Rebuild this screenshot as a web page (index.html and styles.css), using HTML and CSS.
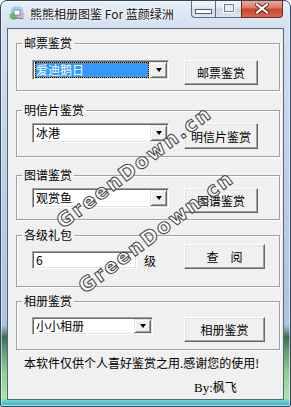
FILE: index.html
```html
<!DOCTYPE html>
<html lang="zh-CN">
<head>
  <meta charset="UTF-8" />
  <meta name="viewport" content="width=device-width, initial-scale=1.0" />
  <title>熊熊相册图鉴 For 蓝颜绿洲</title>
  <link rel="stylesheet" href="styles.css">
</head>
<body>
  <div class="window">
    <div class="titlebar">
      <svg class="app-icon" width="16" height="16" viewBox="0 0 16 16">
        <ellipse cx="8" cy="6" rx="6.5" ry="5" fill="#9fd3ee" />
        <ellipse cx="5" cy="11" rx="4.5" ry="3.5" fill="#6cbf5e" />
        <ellipse cx="11.5" cy="10.5" rx="4" ry="3.5" fill="#f3a6c4" />
        <rect x="5" y="5" width="6" height="5" fill="#fff" stroke="#5a7fa8" stroke-width="0.8" />
        <path d="M3 14 Q8 12 14 14" stroke="#3d8fc0" stroke-width="1.2" fill="none" />
      </svg>
      <span class="title">熊熊相册图鉴 For 蓝颜绿洲</span>
      <div class="caption-btns">
        <span class="cap cap-min"><i></i></span>
        <span class="cap cap-max"><i></i></span>
        <span class="cap cap-close">
          <svg width="14" height="11" viewBox="0 0 14 11">
            <path d="M2 1.5 L12 9.5 M12 1.5 L2 9.5" stroke="#5a2018" stroke-width="4" stroke-linecap="square" />
            <path d="M2 1.5 L12 9.5 M12 1.5 L2 9.5" stroke="#fff" stroke-width="2.2" stroke-linecap="square" />
          </svg>
        </span>
      </div>
    </div>

    <div class="client">
      <fieldset class="group g1">
        <legend>邮票鉴赏</legend>
        <div class="row">
          <div class="combo">
            <span class="combo-text selected">爱迪鹅日</span>
            <span class="drop"><i></i></span>
          </div>
          <button class="btn">邮票鉴赏</button>
        </div>
      </fieldset>

      <fieldset class="group g2">
        <legend>明信片鉴赏</legend>
        <div class="row">
          <div class="combo">
            <span class="combo-text">冰港</span>
            <span class="drop"><i></i></span>
          </div>
          <button class="btn btn-tall">明信片鉴赏</button>
        </div>
      </fieldset>

      <fieldset class="group g3">
        <legend>图谱鉴赏</legend>
        <div class="row">
          <div class="combo">
            <span class="combo-text">观赏鱼</span>
            <span class="drop"><i></i></span>
          </div>
          <button class="btn">图谱鉴赏</button>
        </div>
      </fieldset>

      <fieldset class="group g4">
        <legend>各级礼包</legend>
        <div class="row">
          <div class="level">
            <span class="input">6</span>
            <span class="unit">级</span>
          </div>
          <button class="btn btn-wide">查　阅</button>
        </div>
      </fieldset>

      <fieldset class="group g5">
        <legend>相册鉴赏</legend>
        <div class="row">
          <div class="combo combo-small">
            <span class="combo-text">小小相册</span>
            <span class="drop"><i></i></span>
          </div>
          <button class="btn btn-wide">相册鉴赏</button>
        </div>
      </fieldset>

      <p class="note">本软件仅供个人喜好鉴赏之用.感谢您的使用!</p>
      <p class="by"><span class="by-latin">By:</span>枫飞</p>
    </div>

    <div class="watermark wm1">GreenDown.cn</div>
    <div class="watermark wm2">GreenDown.cn</div>
  </div>
</body>
</html>
```

FILE: styles.css
```css
body {
  margin: 0;
  background: #fff;
  font-family: "Noto Sans CJK SC", "Noto Sans", sans-serif;
  font-size: 12px;
  color: #000;
}
.window {
  position: relative;
  box-sizing: border-box;
  width: 291px;
  height: 407px;
  display: flex;
  flex-direction: column;
  padding: 0 6px 6px;
  border: 1px solid #33475c;
  border-radius: 7px 7px 2px 2px;
  overflow: hidden;
  background: linear-gradient(to bottom,
    #e6eef8 0, #d3e0ef 27px, #bccfe6 45%, #aec3de 80%,
    #3e6c57 83%, #5c9a6c 86%, #92d094 92%, #aee3ab 98%, #3cbde0 99.4%);
  box-shadow: inset 0 0 0 1px rgba(255, 255, 255, 0.55);
}

/* title bar */
.titlebar {
  height: 27px;
  display: flex;
  align-items: flex-start;
}
.app-icon {
  margin: 4px 0 0 2px;
  flex: none;
}
.title {
  margin: 5px 0 0 5px;
  line-height: 16px;
  color: #111;
  text-shadow: 0 0 4px #fff, 0 0 2px #fff;
  white-space: nowrap;
}
.caption-btns {
  margin: -1px 1px 0 auto;
  display: flex;
  height: 18px;
}
.cap {
  box-sizing: border-box;
  height: 18px;
  display: flex;
  align-items: center;
  justify-content: center;
  border: 1px solid #5d6d80;
  border-top: 0;
  background: linear-gradient(to bottom, #f6f8fb 0, #e3eaf3 45%, #cdd8e6 55%, #dbe4ef 100%);
}
.cap-min {
  width: 24px;
  border-radius: 0 0 0 4px;
  border-right: 0;
}
.cap-min i {
  width: 15px;
  height: 3px;
  margin-top: 6px;
  background: #fff;
  border: 1px solid #4e5e70;
}
.cap-max {
  width: 26px;
  border-right: 0;
}
.cap-max i {
  width: 8px;
  height: 6px;
  margin-top: -1px;
  background: #e8eef5;
  border: 1px solid #6f7f92;
  box-shadow: 0 0 0 1px #fff;
}
.cap-close {
  width: 42px;
  border-color: #6b2a20;
  border-radius: 0 0 4px 0;
  background: linear-gradient(to bottom, #eab3a6 0, #dc7a66 45%, #c9442c 55%, #d66a4e 100%);
}

/* client area */
.client {
  flex: 1;
  display: flex;
  flex-direction: column;
  padding: 0 4px 0 8px;
  border: 1px solid #566577;
  background: #f0f0f0;
}
.group {
  width: 264px;
  box-sizing: border-box;
  margin: 0;
  padding: 0;
  border: 1px solid #a0a0a0;
  box-shadow: 1px 1px 0 #fff, inset 1px 1px 0 #fff;
}
.group legend {
  margin-left: 5px;
  padding: 0 2px;
  line-height: 14px;
}
.row {
  display: grid;
  grid-template-columns: 152px auto;
  align-items: start;
  padding-left: 15px;
}
.g1 { margin-top: 7px; }
.g1 .row { padding-top: 10px; padding-bottom: 5px; }
.g2 { margin-top: 12px; }
.g2 .row { padding-top: 6px; padding-bottom: 7px; }
.g3 { margin-top: 11px; }
.g3 .row { padding-top: 6px; padding-bottom: 6px; }
.g4 { margin-top: 8px; }
.g4 .row { padding-top: 2px; padding-bottom: 17px; }
.g5 { margin-top: 7px; }
.g5 .row { padding-top: 9px; padding-bottom: 7px; }

/* combo box & edit */
.combo, .input {
  box-sizing: border-box;
  display: flex;
  background: #fff;
  border: 1px solid;
  border-color: #a0a0a0 #fff #fff #a0a0a0;
  box-shadow: inset 1px 1px 0 #696969, inset -1px -1px 0 #e3e3e3;
  padding: 1px;
}
.combo {
  width: 137px;
  height: 20px;
}
.combo-small {
  width: 121px;
  height: 18px;
}
.combo-text {
  flex: 1;
  padding-left: 2px;
  line-height: 16px;
  white-space: nowrap;
}
.combo-small .combo-text { line-height: 14px; }
.combo-text.selected {
  margin: 0 1px 0 1px;
  padding-left: 0;
  line-height: 14px;
  color: #fff;
  border: 1px dotted #000;
  background: linear-gradient(#3399ff, #3399ff) padding-box, linear-gradient(#e8901a, #e8901a) border-box;
}
.drop {
  box-sizing: border-box;
  width: 17px;
  display: flex;
  align-items: center;
  justify-content: center;
  background: #f0f0f0;
  border: 1px solid;
  border-color: #e3e3e3 #696969 #696969 #e3e3e3;
  box-shadow: inset 1px 1px 0 #fff, inset -1px -1px 0 #a0a0a0;
}
.drop i {
  width: 0;
  height: 0;
  border-left: 3.5px solid transparent;
  border-right: 3.5px solid transparent;
  border-top: 4px solid #000;
}
.level {
  display: flex;
  align-items: center;
  margin-top: 7px;
}
.input {
  width: 105px;
  height: 18px;
  padding-left: 3px;
  line-height: 14px;
}
.unit {
  margin-left: 7px;
}

/* push buttons */
.btn {
  box-sizing: border-box;
  width: 74px;
  height: 25px;
  padding: 0;
  font: inherit;
  color: #000;
  background: #f0f0f0;
  border: 1px solid;
  border-color: #fff #696969 #696969 #fff;
  box-shadow: inset -1px -1px 0 #a0a0a0, inset 1px 1px 0 #e3e3e3;
}
.btn-tall { height: 26px; }
.btn-wide { width: 81px; }

.note {
  margin: 6px 0 0 8px;
  line-height: 14px;
  white-space: nowrap;
}
.by {
  margin: 10px 0 0 178px;
  line-height: 14px;
}
.by-latin {
  font-family: "Liberation Serif", serif;
  font-size: 13px;
}

/* site watermark laid over the dialog */
.watermark {
  position: absolute;
  font: bold 20px "DejaVu Sans", sans-serif;
  letter-spacing: 2px;
  color: rgba(255, 255, 255, 0.9);
  -webkit-text-stroke: 1px #444;
  white-space: nowrap;
  transform: translate(-50%, -50%) rotate(-37deg);
  pointer-events: none;
}
.wm1 { left: 133px; top: 166px; }
.wm2 { left: 155px; top: 231px; }
```
